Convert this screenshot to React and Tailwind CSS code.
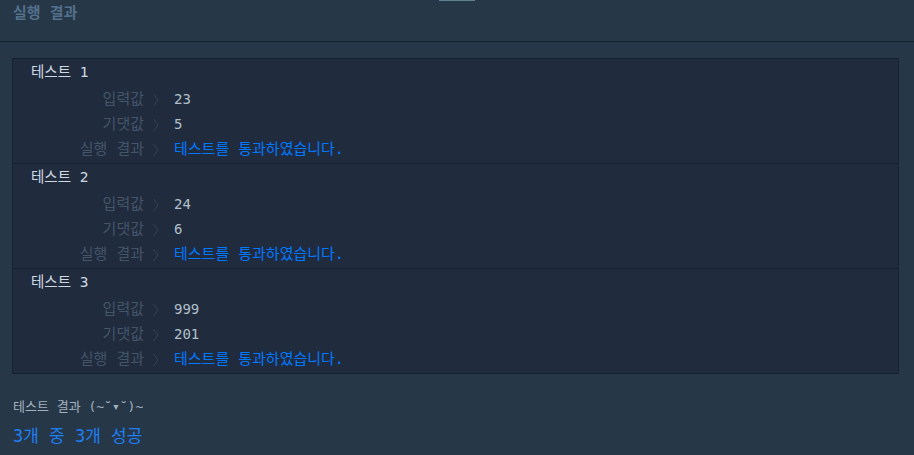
import React from "react";

const tests = [
  { input: "23", expected: "5" },
  { input: "24", expected: "6" },
  { input: "999", expected: "201" },
];

function Chevron() {
  return (
    <svg width="8" height="16" viewBox="0 0 8 16" className="ml-[8px] mr-[14px] shrink-0">
      <path d="M1.5 2 L6 8 L1.5 14" fill="none" stroke="#34445a" strokeWidth="1" />
    </svg>
  );
}

function Row({ label, children }) {
  return (
    <div className="flex h-[25px] items-center">
      <div className="w-[131px] text-right text-[15px] text-[#44556a]">{label}</div>
      <Chevron />
      {children}
    </div>
  );
}

export default function App() {
  return (
    <div className="min-h-[455px] w-full bg-[#263747] font-['DejaVu_Sans_Mono','Noto_Sans_CJK_KR',monospace]">
      <div className="h-[42px] border-b border-[#172231]">
        <div className="mx-auto h-px w-9 bg-[#5f8191]" />
        <div className="mt-[2px] pl-[13px] text-[15px] font-bold leading-[20px] text-[#53708c]">
          실행 결과
        </div>
      </div>

      <div className="ml-3 mr-[15px] mt-4 border border-[#172231] bg-[#202b3d]">
        {tests.map((t, i) => (
          <div key={i} className={i > 0 ? "border-t border-[#172231]" : ""}>
            <div className="flex h-[28px] items-center pl-[18px] text-[14.5px] text-[#cfd9e3]">
              테스트 {i + 1}
            </div>
            <Row label="입력값">
              <span className="text-[14px] text-[#b2c0cc]">{t.input}</span>
            </Row>
            <Row label="기댓값">
              <span className="text-[14px] text-[#b2c0cc]">{t.expected}</span>
            </Row>
            <Row label="실행 결과">
              <span className="text-[15px] text-[#0078ff]">테스트를 통과하였습니다.</span>
            </Row>
            <div className="h-px" />
          </div>
        ))}
      </div>

      <div className="mt-6 pl-[13px] text-[13px] leading-[18px] text-[#a3b1bf]">
        테스트 결과 (~˘▾˘)~
      </div>
      <div className="mt-2 pl-[13px] text-[17px] leading-[24px] text-[#1f7ff5]">
        3개 중 3개 성공
      </div>
    </div>
  );
}
